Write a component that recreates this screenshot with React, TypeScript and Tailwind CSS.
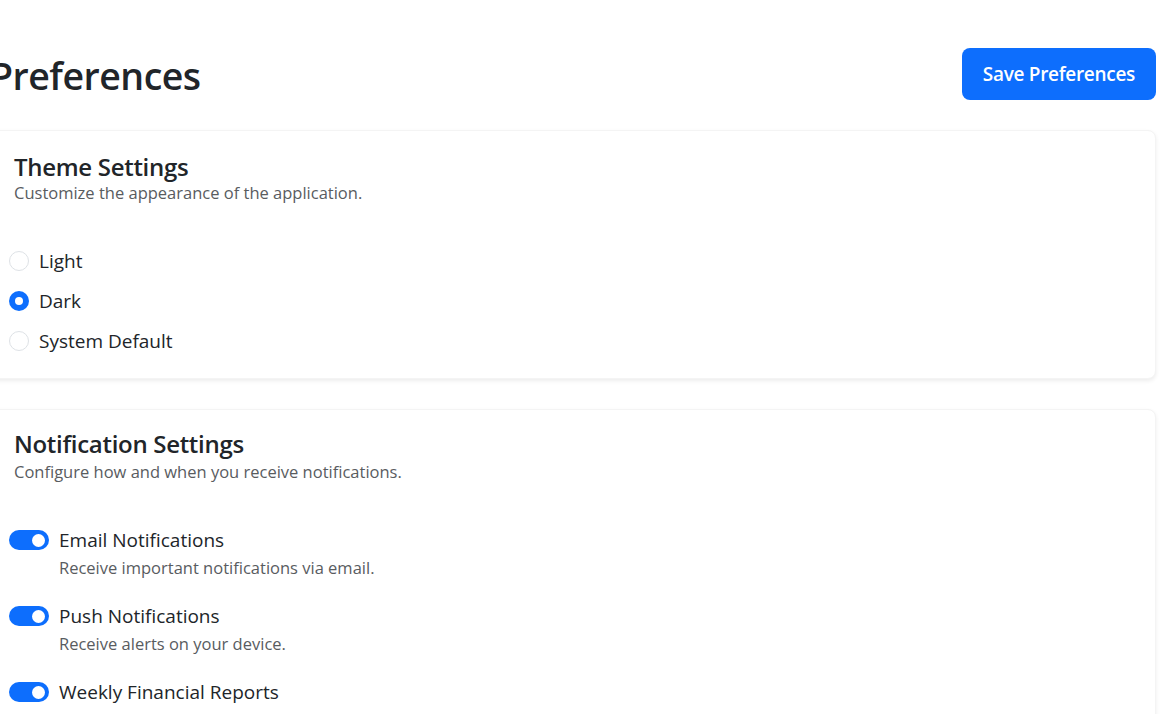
import { useState } from 'react';

const font = { fontFamily: '"Open Sans", "Noto Sans", sans-serif' };

const notifications = [
    { key: 'email', label: 'Email Notifications', desc: 'Receive important notifications via email.' },
    { key: 'push', label: 'Push Notifications', desc: 'Receive alerts on your device.' },
    { key: 'weekly', label: 'Weekly Financial Reports', desc: 'Get a summary of your weekly financial activity.' },
];

export default function App() {
    const [theme, setTheme] = useState('dark');
    const [enabled, setEnabled] = useState<Record<string, boolean>>({ email: true, push: true, weekly: true });

    return (
        <div className="bg-white h-screen overflow-hidden text-[#212529]" style={font}>
            <div className="ml-[-10px] mr-[11px] pt-[48px]">
                {/* Header */}
                <div className="flex h-[52px] items-start justify-between mb-[30px]">
                    <h1 className="text-[37.5px] font-semibold leading-[46px] mt-[5px] tracking-[-0.5px] whitespace-nowrap">Preferences</h1>
                    <button className="h-[52px] px-[21px] pt-[1px] bg-[#0d6efd] text-white rounded-lg text-[19px] font-semibold tracking-[-0.3px]">
                        Save Preferences
                    </button>
                </div>

                {/* Theme */}
                <div className="bg-white rounded-lg shadow-[0_2px_4px_rgba(0,0,0,0.075)] border border-[#f4f4f4] pl-[23px] pt-[21px] pb-[25px]">
                    <h2 className="text-[24px] font-semibold leading-[29px] tracking-[-0.3px]">Theme Settings</h2>
                    <p className="text-[16.5px] leading-[24px] text-[#595c5f]">Customize the appearance of the application.</p>
                    <div className="mt-[44px] -ml-[5px] flex flex-col gap-[16px]">
                        {[
                            ['light', 'Light'],
                            ['dark', 'Dark'],
                            ['system', 'System Default'],
                        ].map(([val, label]) => (
                            <label key={val} className="flex items-center h-[24px] cursor-pointer" onClick={() => setTheme(val)}>
                                <span
                                    className={`size-[20px] rounded-full flex items-center justify-center ${
                                        theme === val ? 'bg-[#0d6efd]' : 'border border-[#dee2e6] bg-white'
                                    }`}
                                >
                                    {theme === val && <span className="size-[8px] rounded-full bg-white" />}
                                </span>
                                <span className="ml-[10px] text-[19px] leading-[24px]">{label}</span>
                            </label>
                        ))}
                    </div>
                </div>

                {/* Notifications */}
                <div className="mt-[30px] bg-white rounded-lg shadow-[0_2px_4px_rgba(0,0,0,0.075)] border border-[#f4f4f4] pl-[23px] pt-[19px] pb-[17px]">
                    <h2 className="text-[24px] font-semibold leading-[29px] tracking-[-0.3px]">Notification Settings</h2>
                    <p className="mt-[2px] text-[16.5px] leading-[24px] text-[#595c5f]">Configure how and when you receive notifications.</p>
                    <div className="mt-[44px] -ml-[5px] flex flex-col gap-[24px]">
                        {notifications.map((n) => (
                            <div key={n.key} className="flex items-start">
                                <button
                                    onClick={() => setEnabled({ ...enabled, [n.key]: !enabled[n.key] })}
                                    className={`mt-[2px] w-[40px] h-[20px] rounded-full flex items-center px-[4px] ${
                                        enabled[n.key] ? 'bg-[#0d6efd] justify-end' : 'bg-white border border-[#dee2e6] justify-start'
                                    }`}
                                >
                                    <span className={`size-[13px] rounded-full ${enabled[n.key] ? 'bg-white' : 'bg-[#dee2e6]'}`} />
                                </button>
                                <div className="ml-[10px]">
                                    <div className="text-[19px] leading-[24px]">{n.label}</div>
                                    <div className="mt-[4px] text-[16.5px] leading-[24px] text-[#595c5f]">{n.desc}</div>
                                </div>
                            </div>
                        ))}
                    </div>
                </div>
            </div>
        </div>
    );
}
